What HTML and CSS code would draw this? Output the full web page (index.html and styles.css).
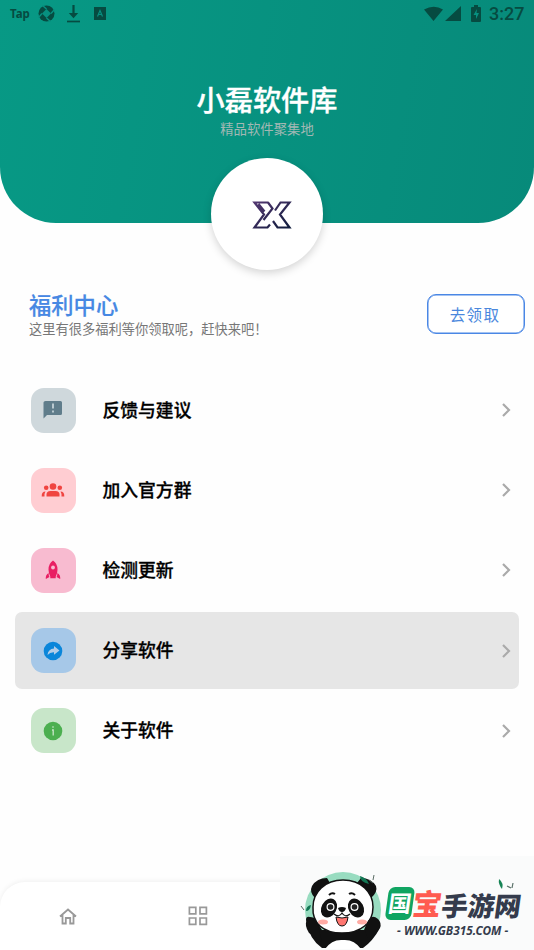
FILE: index.html
```html
<!DOCTYPE html>
<html lang="zh-CN">
<head>
<meta charset="utf-8">
<title>小磊软件库</title>
<link rel="stylesheet" href="styles.css">
</head>
<body>
<div class="screen">
  <header class="hero">
    <div class="status">
      <span class="tap">Tap</span>
      <svg class="s-swirl" width="17" height="17" viewBox="0 0 17 17"><circle cx="8.500" cy="8.500" r="8" fill="currentColor"/><path d="M8.500 4l4.500 4.500L8.500 13 4 8.500z" fill="#079080"/><path d="M8.500 4L4.500.5M13 8.500l3.500-4M8.500 13l4 3.500M4 8.500l-3.500 4" stroke="#079080" stroke-width="1.400"/></svg>
      <svg class="s-down" width="13" height="18" viewBox="0 0 13 18"><path d="M6.500 0v11" stroke="currentColor" stroke-width="2.200"/><path d="M1.800 8h9.400l-4.700 5.200z" fill="currentColor"/><path d="M0 16.500h13" stroke="currentColor" stroke-width="1.700"/></svg>
      <svg class="s-app" width="12" height="13" viewBox="0 0 12 13"><path d="M0 0h12v13H0z" fill="currentColor"/><path d="M3.500 9.500L6 3.500l2.500 6M4.500 7.500h3" fill="none" stroke="#079080" stroke-width="1.200"/></svg>
      <span class="grow"></span>
      <svg width="38" height="16" viewBox="0 0 38 16"><path d="M0 3.500Q10-2 19 3.500L9.500 15zM37 0v15H21z" fill="currentColor"/></svg>
      <svg class="s-bat" width="10" height="17" viewBox="0 0 10 17"><path d="M3 0h4v2h2q1 0 1 1v13q0 1-1 1H1q-1 0-1-1V3q0-1 1-1h2z" fill="currentColor"/><path d="M6 4L2.500 10H5v4l3-6H5.500z" fill="#079080"/></svg>
      <span class="time">3:27</span>
    </div>
    <h1>小磊软件库</h1>
    <p>精品软件聚集地</p>
    <div class="avatar">
      <svg width="40" height="28" viewBox="0 0 40 28" fill="none" stroke-width="2.200">
        <defs><linearGradient id="ink" x2="1" y2="1"><stop stop-color="#51366f"/><stop offset="1" stop-color="#101c3d"/></linearGradient></defs>
        <path stroke="url(#ink)" d="M16.500 1.500H2.500L12 13.500 2.500 26.500H15.500L18 23.500M6.500 3l6 7.500M16 1.500l4.500 6-9 11.500M23 9.500l5.500-8h9L28 13.500l9.500 13h-12L21 20"/>
      </svg>
    </div>
  </header>

  <section class="welfare">
    <div><h2>福利中心</h2><p>这里有很多福利等你领取呢，赶快来吧！</p></div>
    <button>去领取</button>
  </section>

  <main class="list">
    <div class="row">
      <span class="tile slate"><svg width="20" height="20" viewBox="0 0 20 20"><path d="M2.500 1h15q1.500 0 1.500 1.500v11q0 1.500-1.500 1.500H4l-3.500 3.500V2.500Q.5 1 2.500 1z" fill="#607d8b"/><path d="M10 3.500v5M10 10.500v2" stroke="#d0dce1" stroke-width="1.600"/></svg></span>
      <b>反馈与建议</b><svg class="chev" width="9" height="14" viewBox="0 0 9 14"><path d="M1 1l6 6-6 6"/></svg>
    </div>
    <div class="row">
      <span class="tile red"><svg width="24" height="18" viewBox="0 0 24 18" fill="#f04440"><circle cx="12" cy="5.500" r="3.300"/><path d="M5.500 15.500v-2q0-3.500 4-3.500h5q4 0 4 3.500v2z"/><circle cx="5.200" cy="6.800" r="2.300"/><circle cx="18.800" cy="6.800" r="2.300"/><path d="M4.500 10.500Q.5 10.500.7 15.500h2.800q-.3-3 1-5zM19.500 10.500q4 0 3.800 5h-2.800q.3-3-1-5z"/></svg></span>
      <b>加入官方群</b><svg class="chev" width="9" height="14" viewBox="0 0 9 14"><path d="M1 1l6 6-6 6"/></svg>
    </div>
    <div class="row">
      <span class="tile pink"><svg width="16" height="20" viewBox="0 0 16 20"><path d="M8 .5q4.500 3 4.500 9 0 4-1.700 7H5.200q-1.700-3-1.700-7 0-6 4.500-9zM3.500 13q.3 3 1 4L.8 19q-.5-4 2.700-6zM12.500 13q-.3 3-1 4l3.700 2q.5-4-2.700-6zM5.300 16h5.400v2.300H5.300z" fill="#e91e63"/><circle cx="8" cy="7.500" r="1.900" fill="#f8bbd0"/></svg></span>
      <b>检测更新</b><svg class="chev" width="9" height="14" viewBox="0 0 9 14"><path d="M1 1l6 6-6 6"/></svg>
    </div>
    <div class="row active">
      <span class="tile blue"><svg width="20" height="20" viewBox="0 0 20 20"><circle cx="10" cy="10" r="9.300" fill="#0a86da"/><path d="M11 5l5.500 4.500-5.500 4.300v-2.600q-4-.2-6.500 2.800Q5 8 11 7.500z" fill="#b2cde8"/></svg></span>
      <b>分享软件</b><svg class="chev" width="9" height="14" viewBox="0 0 9 14"><path d="M1 1l6 6-6 6"/></svg>
    </div>
    <div class="row">
      <span class="tile green"><svg width="20" height="20" viewBox="0 0 20 20"><circle cx="10" cy="10" r="9.300" fill="#4caf50"/><path d="M10 5.200v1.600M9 9h1.200v5.500" fill="none" stroke="#c8e6c9" stroke-width="1.300"/></svg></span>
      <b>关于软件</b><svg class="chev" width="9" height="14" viewBox="0 0 9 14"><path d="M1 1l6 6-6 6"/></svg>
    </div>
  </main>

  <nav class="tabs">
    <svg width="18" height="17" viewBox="0 0 18 17" fill="none" stroke="#999" stroke-width="1.800"><path d="M1 8.500l8-7 8 7M3.500 7v8.500h3.300V10h4.400v5.500h3.300V7"/></svg>
    <svg class="grid" width="20" height="20" viewBox="0 0 20 20" fill="none" stroke="#999" stroke-width="1.700"><path d="M1.400 1.400h6.400v6.400H1.400zM12 1.400h6.400v6.400H12zM1.400 12h6.400v6.400H1.400zM12 12h6.400v6.400H12z"/></svg>
  </nav>

  <aside class="brand">
    <svg class="panda" width="84" height="78" viewBox="0 0 84 78">
      <circle cx="43" cy="39" r="38" fill="#98dcc0"/>
      <path d="M6 49q0-4 4-3 4 0 6 3l6 10h42l4-10q4-6 10-1 4 4 2 9-7 13-17 20H22Q9 68 6 49z" fill="#111"/>
      <path d="M15 27Q9 21 12 15q5-8 15-8l3 5zM71 27q7-6 5-12-5-8-15-8l-4 5z" fill="#111"/>
      <path d="M25 78q7-10 18-9 11-1 18 9z" fill="#fff"/>
      <path d="M43 9c18 0 30 12 30 27 0 16-12 26-31 26S12 52 13 36C13 21 25 9 43 9z" fill="#fff" stroke="#111" stroke-width="1.500"/>
      <ellipse cx="29" cy="37" rx="7.500" ry="10" transform="rotate(28 29 37)" fill="#111"/>
      <ellipse cx="56" cy="37" rx="7.500" ry="10" transform="rotate(-28 56 37)" fill="#111"/>
      <circle cx="30.500" cy="36" r="3.400" fill="#222" stroke="#fff" stroke-width="1.200"/><circle cx="54.500" cy="36" r="3.400" fill="#222" stroke="#fff" stroke-width="1.200"/>
      <path d="M35 23q-3-2-6 1M49 23q3-2 6 1" fill="none" stroke="#111" stroke-width="2"/>
      <ellipse cx="23" cy="51" rx="5" ry="2.500" fill="#ffaca5"/><ellipse cx="62" cy="51" rx="5" ry="2.500" fill="#ffaca5"/>
      <path d="M38 37q4-2 8 0-1 4-4 4t-4-4z" fill="#111"/>
      <path d="M36 46q6 2 12 0-1 9-6 9t-6-9z" fill="#ff7670" stroke="#111"/>
      <path d="M34 43q5 4 8-1 3 5 8 1" fill="none" stroke="#111" stroke-width="1.200"/>
      <path d="M67 54q0-7 6-6 9 1 6 10l-9 12q-7-9-3-16zM18 55q-5-10-11-6-3 5 2 13l13 9z" fill="#111"/>
      <path d="M6 40q0-5 5-6-1 6-5 6zM69 13q-9-2-9-8 7 2 9 8z" fill="#137653"/>
      <path d="M1 35l3 4M69 9l4 3M74 4l-1 5" stroke="#5a6c64"/>
    </svg>
    <div class="wordmark">
      <div class="name"><span class="guo">国</span><span class="bao">宝</span><span class="rest">手游网</span></div>
      <div class="url">- WWW.GB315.COM -</div>
    </div>
    <svg class="leaf" width="18" height="13" viewBox="0 0 18 13"><path d="M1 1q5 4 3 10Q0 6 1 1z" fill="#168355"/><path d="M9 8l4 2M15 5l-1 5" stroke="#587067" stroke-width="1.200"/></svg>
  </aside>
</div>
</body>
</html>
```
FILE: styles.css
```css
* { box-sizing: border-box; }
body, h1, h2, p { margin: 0; }
body { background: #fff; font-family: "Noto Sans CJK SC", "Noto Sans", sans-serif; }
.screen { position: relative; width: 534px; height: 950px; overflow: hidden; background: #fefefe; display: flex; flex-direction: column; }

.hero { height: 222.500px; flex: none; display: flex; flex-direction: column; align-items: center; border-radius: 0 0 56px 56px; background: linear-gradient(100deg, #079985, #078a7a); }
.status { width: 100%; height: 27px; flex: none; display: flex; align-items: center; padding: 0 10px; color: #064b41; }
.tap { width: 28px; font: 700 11.500px/16px "Noto Sans", sans-serif; }
.s-down { margin-left: 12px; }
.s-app { margin-left: 14px; }
.grow { flex: 1; }
.s-bat { margin: 0 8px 0 9px; }
.time { width: 35px; font: 500 18px/27px Roboto, sans-serif; white-space: nowrap; }
.hero h1 { margin-top: 52px; font-size: 28.200px; line-height: 40px; font-weight: 500; color: #fff; -webkit-text-stroke: .3px #fff; }
.hero p { margin-top: -1px; font-size: 13.400px; line-height: 20px; color: #a2b8b4; }
.avatar { margin-top: 19.500px; width: 112px; height: 112px; flex: none; border-radius: 50%; background: #fff; display: flex; align-items: center; justify-content: center; padding: 2px 0 0 10px; box-shadow: 0 3px 9px rgba(0, 0, 0, .17); }

.welfare { display: flex; justify-content: space-between; align-items: flex-start; padding: 66px 9px 0 29px; height: 149px; flex: none; }
.welfare h2 { font-size: 22.300px; line-height: 30px; font-weight: 500; color: #4788e3; -webkit-text-stroke: .2px #4788e3; }
.welfare p { font-size: 13.250px; line-height: 20px; color: #777; white-space: nowrap; }
.welfare button { margin-top: 5.500px; width: 98px; height: 40px; padding: 0; border: 1.500px solid #4a87e5; border-radius: 9px; background: #fff; color: #4a87dd; font: 400 15.500px/36px "Noto Sans CJK SC", sans-serif; letter-spacing: 1.300px; text-indent: -2px; box-shadow: inset 0 0 0 .5px #4a87e5; }

.list { display: flex; flex-direction: column; gap: 3.200px; padding: 0 15px; }
.row { height: 77px; display: flex; align-items: center; padding: 0 8px 0 16px; border-radius: 7px; }
.active { background: #e6e6e6; }
.tile { width: 45px; height: 45px; border-radius: 13px; display: flex; align-items: center; justify-content: center; padding-right: 1px; }
.slate { background: #cfd8dc; }
.red { background: #ffcdd2; }
.pink { background: #f8bbd0; }
.blue { background: #a6c8e8; }
.green { background: #c8e6c9; }
.row b { flex: 1; margin: -3px 0 0 26.500px; font-size: 17.800px; line-height: 26px; font-weight: 500; color: #000; -webkit-text-stroke: .3px #000; }
.chev { fill: none; stroke: #aaa; stroke-width: 2.200; }

.tabs { margin-top: auto; height: 68px; flex: none; display: flex; align-items: center; padding-left: 59px; gap: 111px; border-radius: 25px 25px 0 0; background: #fff; box-shadow: 0 -1px 5px rgba(0, 0, 0, .06); }

.brand { position: absolute; left: 280px; top: 856px; width: 254px; height: 94px; background: #fafbfb; }
.panda { position: absolute; left: 20px; top: 15px; }
.wordmark { position: absolute; left: 107px; top: 27px; width: 138px; }
.name { display: flex; align-items: center; height: 40px; font-weight: 900; transform: skewX(-8deg); }
.guo { width: 26px; height: 33px; border-radius: 6px; background: #10a562; color: #fff; font-size: 23px; line-height: 31px; font-weight: 700; display: flex; justify-content: center; }
.bao { width: 27px; font-size: 29px; line-height: 40px; margin-top: -2px; color: #ff5b50; }
.rest { margin: 4px 0 0 2px; font-size: 26.500px; line-height: 38px; color: #343b4c; white-space: nowrap; }
.url { margin-left: 10px; font: italic 700 11.800px/15px "Noto Sans", sans-serif; color: #343b4c; white-space: nowrap; }
.leaf { position: absolute; left: 218px; top: 22px; }
```
